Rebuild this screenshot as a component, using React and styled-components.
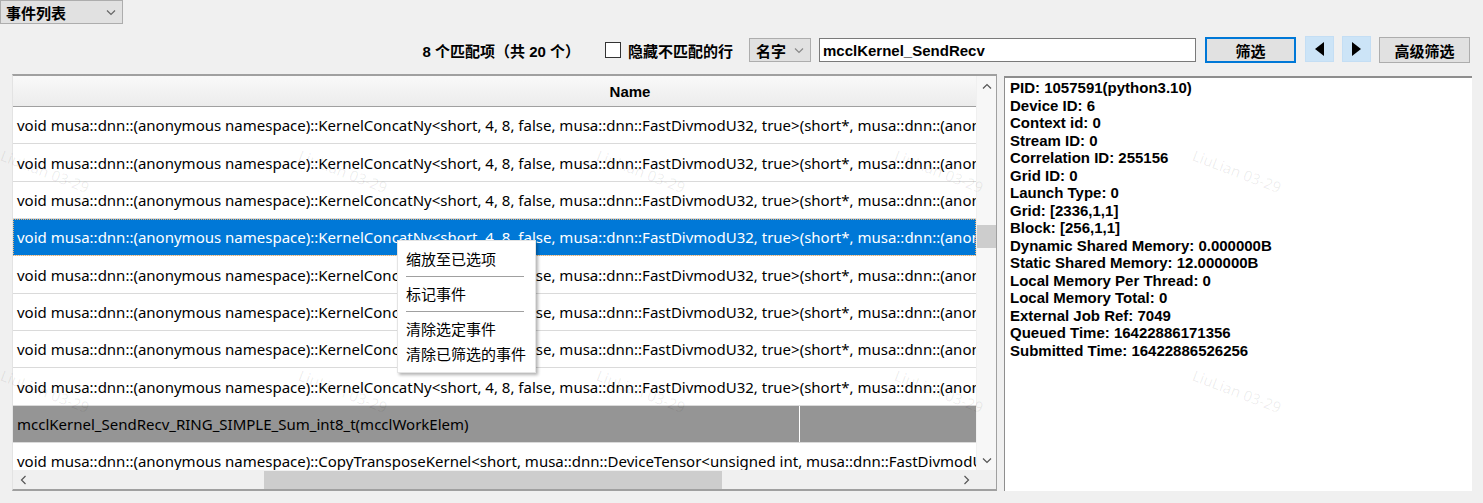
import React from 'react';
import styled, { createGlobalStyle } from 'styled-components';

const GlobalStyle = createGlobalStyle`
    html, body {
        margin: 0;
        padding: 0;
        background: #f0f0f0;
    }
    * {
        box-sizing: border-box;
    }
`;

const cjk = `"Noto Sans", "Noto Sans CJK SC", sans-serif`;
const boldCjk = `"Liberation Sans", "Noto Sans CJK SC", sans-serif`;

const Page = styled.div`
    position: relative;
    width: 1483px;
    height: 503px;
    overflow: hidden;
    background: #f0f0f0;
    font-family: ${cjk};
    color: #000;
`;

const ViewCombo = styled.div`
    width: 123px;
    height: 24px;
    display: flex;
    align-items: center;
    justify-content: space-between;
    padding: 0 6px 0 5px;
    background: #e1e1e1;
    border: 1px solid #adadad;
    font-family: ${boldCjk};
    font-weight: bold;
    font-size: 15px;
`;

const Toolbar = styled.div`
    display: flex;
    align-items: center;
    justify-content: flex-end;
    height: 28px;
    margin-top: 12px;
    padding-right: 13px;
    font-family: ${boldCjk};
    font-weight: bold;
    font-size: 15px;
`;

const MatchCount = styled.span`
    margin-right: 25px;
    white-space: nowrap;
`;

const CheckBox = styled.span`
    width: 16px;
    height: 16px;
    background: #fff;
    border: 1px solid #333;
    margin-right: 7px;
`;

const CheckLabel = styled.span`
    margin-right: 16px;
    white-space: nowrap;
`;

const FieldCombo = styled.div`
    width: 62px;
    height: 24px;
    display: flex;
    align-items: center;
    justify-content: space-between;
    padding: 0 6px 0 6px;
    background: #e1e1e1;
    border: 1px solid #adadad;
    margin-right: 8px;
`;

const SearchInput = styled.div`
    width: 377px;
    height: 24px;
    display: flex;
    align-items: center;
    padding-left: 3px;
    background: #fff;
    border: 1px solid #7a7a7a;
    margin-right: 9px;
`;

const Button = styled.div`
    width: 91px;
    height: 26px;
    display: flex;
    align-items: center;
    justify-content: center;
    background: #e1e1e1;
    border: ${p => (p.$focused ? '2px solid #0078d7' : '1px solid #adadad')};
    margin-left: ${p => p.$ml || 0}px;
`;

const ArrowButton = styled.div`
    width: 29px;
    height: 26px;
    display: flex;
    align-items: center;
    justify-content: center;
    background: #cce4f7;
    border: 1px solid #c4def4;
    margin-left: ${p => p.$ml || 0}px;
    margin-top: -2px;
`;

const Main = styled.div`
    display: flex;
    gap: 7px;
    margin-top: 10px;
    padding-left: 12px;
`;

const Table = styled.div`
    width: 985px;
    height: 417px;
    display: grid;
    grid-template-columns: minmax(0, 1fr) 20px;
    grid-template-rows: 31px minmax(0, 1fr) 19px;
    border-top: 2px solid #a0a0a0;
    border-left: 1px solid #e3e3e3;
    border-right: 1px solid #a0a0a0;
    border-bottom: 2px solid #a0a0a0;
    background: #fff;
`;

const HeaderCell = styled.div`
    overflow: hidden;
    background: linear-gradient(#f9f9f9, #ececec);
    border-bottom: 1px solid #a0a0a0;
`;

// the Name column is wider than the visible part, so its label sits right of centre
const HeaderLabel = styled.div`
    width: 1234px;
    height: 100%;
    display: flex;
    align-items: center;
    justify-content: center;
    font-family: ${boldCjk};
    font-weight: bold;
    font-size: 15px;
`;

const VScroll = styled.div`
    grid-row: 1 / 3;
    grid-column: 2;
    display: flex;
    flex-direction: column;
    align-items: center;
    background: #f7f7f7;
    border-left: 1px solid #f0f0f0;
`;

const ScrollArrowBox = styled.div`
    height: ${p => p.$h || 20}px;
    width: ${p => p.$w || 20}px;
    margin-left: ${p => (p.$end ? 'auto' : '0')};
    margin-top: ${p => (p.$bottom ? 'auto' : '0')};
    display: flex;
    align-items: center;
    justify-content: center;
`;

const VThumb = styled.div`
    width: 19px;
    height: 23px;
    background: #cdcdcd;
    margin-top: ${p => p.$top}px;
`;

const Body = styled.div`
    overflow: hidden;
    background: #fff;
`;

const Row = styled.div`
    position: relative;
    height: 37.35px;
    display: flex;
    align-items: center;
    padding-left: 4px;
    white-space: nowrap;
    font-size: 15px;
    border-bottom: 1px solid #dadada;
    background: ${p => (p.$selected ? '#0078d7' : p.$marked ? '#959595' : '#fff')};
    color: ${p => (p.$selected ? '#fff' : '#000')};
    outline: ${p => (p.$selected ? '1px dotted #e8b070' : 'none')};
    outline-offset: -1px;

    &::after {
        content: '';
        display: ${p => (p.$marked ? 'block' : 'none')};
        position: absolute;
        left: 786px;
        top: 0;
        bottom: 0;
        width: 1px;
        background: #fff;
    }
`;

const HScroll = styled.div`
    display: flex;
    align-items: center;
    background: #f0f0f0;
`;

const HThumb = styled.div`
    width: 458px;
    height: 18px;
    background: #cdcdcd;
    margin-left: 231px;
`;

const Corner = styled.div`
    background: #f0f0f0;
`;

const Detail = styled.div`
    width: 468px;
    height: 415px;
    margin-top: 2px;
    background: #fff;
    border-top: 2px solid #8e8e8e;
    border-left: 1px solid #8e8e8e;
    padding: 1px 0 0 5px;
    font-family: "Liberation Sans", Arial, sans-serif;
    font-weight: bold;
    font-size: 15px;
    line-height: 17.5px;
`;

const Watermark = styled.div`
    position: absolute;
    left: ${p => p.$x}px;
    top: ${p => p.$y}px;
    transform: rotate(21deg);
    transform-origin: left top;
    font-family: ${cjk};
    font-size: 15px;
    color: rgba(0, 0, 0, 0.07);
    pointer-events: none;
    white-space: nowrap;
`;

const Menu = styled.div`
    position: absolute;
    left: 397px;
    top: 240px;
    width: 139px;
    padding: 6px 0 5px;
    background: #fff;
    border: 1px solid #e4e4e4;
    box-shadow: 2px 2px 3px rgba(0, 0, 0, 0.3);
    font-family: ${cjk};
    font-size: 15px;
`;

const MenuItem = styled.div`
    height: 25px;
    line-height: 25px;
    padding-left: 8px;
    white-space: nowrap;
`;

const MenuSep = styled.div`
    height: 1px;
    margin: 4px 11px 5px 8px;
    background: #a0a0a0;
`;

const Chevron = ({ dir, color = '#555' }) => {
    const paths = {
        down: 'M1 1.5 L5 5.5 L9 1.5',
        up: 'M1 5.5 L5 1.5 L9 5.5',
        left: 'M5.5 1 L1.5 5 L5.5 9',
        right: 'M1.5 1 L5.5 5 L1.5 9',
    };
    const vertical = dir === 'up' || dir === 'down';
    return (
        <svg width={vertical ? 10 : 7} height={vertical ? 7 : 10} viewBox={vertical ? '0 0 10 7' : '0 0 7 10'}>
            <path d={paths[dir]} fill="none" stroke={color} strokeWidth="1.2" />
        </svg>
    );
};

const Triangle = ({ dir }) => (
    <svg width="9" height="14" viewBox="0 0 9 14">
        <path d={dir === 'left' ? 'M9 0 L0 7 L9 14 Z' : 'M0 0 L9 7 L0 14 Z'} fill="#000" />
    </svg>
);

const concat = 'void musa::dnn::(anonymous namespace)::KernelConcatNy<short, 4, 8, false, musa::dnn::FastDivmodU32, true>(short*, musa::dnn::(anonymous namespace)::Params)';

const rows = [
    { text: concat },
    { text: concat },
    { text: concat },
    { text: concat, selected: true },
    { text: concat },
    { text: concat },
    { text: concat },
    { text: concat },
    { text: 'mcclKernel_SendRecv_RING_SIMPLE_Sum_int8_t(mcclWorkElem)', marked: true },
    { text: 'void musa::dnn::(anonymous namespace)::CopyTransposeKernel<short, musa::dnn::DeviceTensor<unsigned int, musa::dnn::FastDivmodU32>>' },
];

const details = [
    'PID: 1057591(python3.10)',
    'Device ID: 6',
    'Context id: 0',
    'Stream ID: 0',
    'Correlation ID: 255156',
    'Grid ID: 0',
    'Launch Type: 0',
    'Grid: [2336,1,1]',
    'Block: [256,1,1]',
    'Dynamic Shared Memory: 0.000000B',
    'Static Shared Memory: 12.000000B',
    'Local Memory Per Thread: 0',
    'Local Memory Total: 0',
    'External Job Ref: 7049',
    'Queued Time: 16422886171356',
    'Submitted Time: 16422886526256',
];

const marks = [];
[145, 365].forEach(y => {
    [5, 303, 601, 899, 1197].forEach(x => marks.push({ x, y }));
});

export default function App() {
    return (
        <Page>
            <GlobalStyle />
            <ViewCombo>
                事件列表
                <Chevron dir="down" color="#666" />
            </ViewCombo>

            <Toolbar>
                <MatchCount>8 个匹配项（共 20 个）</MatchCount>
                <CheckBox />
                <CheckLabel>隐藏不匹配的行</CheckLabel>
                <FieldCombo>
                    名字
                    <Chevron dir="down" color="#888" />
                </FieldCombo>
                <SearchInput>mcclKernel_SendRecv</SearchInput>
                <Button $focused>筛选</Button>
                <ArrowButton $ml={9}><Triangle dir="left" /></ArrowButton>
                <ArrowButton $ml={8}><Triangle dir="right" /></ArrowButton>
                <Button $ml={8}>高级筛选</Button>
            </Toolbar>

            <Main>
                <Table>
                    <HeaderCell>
                        <HeaderLabel>Name</HeaderLabel>
                    </HeaderCell>
                    <VScroll>
                        <ScrollArrowBox><Chevron dir="up" /></ScrollArrowBox>
                        <VThumb $top={129} />
                        <ScrollArrowBox $bottom><Chevron dir="down" /></ScrollArrowBox>
                    </VScroll>
                    <Body>
                        {rows.map((r, i) => (
                            <Row key={i} $selected={r.selected} $marked={r.marked}>
                                {r.text}
                            </Row>
                        ))}
                    </Body>
                    <HScroll>
                        <ScrollArrowBox $h={19}><Chevron dir="left" /></ScrollArrowBox>
                        <HThumb />
                        <ScrollArrowBox $h={19} $end><Chevron dir="right" /></ScrollArrowBox>
                    </HScroll>
                    <Corner />
                </Table>

                <Detail>
                    {details.map(d => (
                        <div key={d}>{d}</div>
                    ))}
                </Detail>
            </Main>

            {marks.map((m, i) => (
                <Watermark key={i} $x={m.x} $y={m.y}>LiuLian 03-29</Watermark>
            ))}

            <Menu>
                <MenuItem>缩放至已选项</MenuItem>
                <MenuSep />
                <MenuItem>标记事件</MenuItem>
                <MenuSep />
                <MenuItem>清除选定事件</MenuItem>
                <MenuItem>清除已筛选的事件</MenuItem>
            </Menu>
        </Page>
    );
}
